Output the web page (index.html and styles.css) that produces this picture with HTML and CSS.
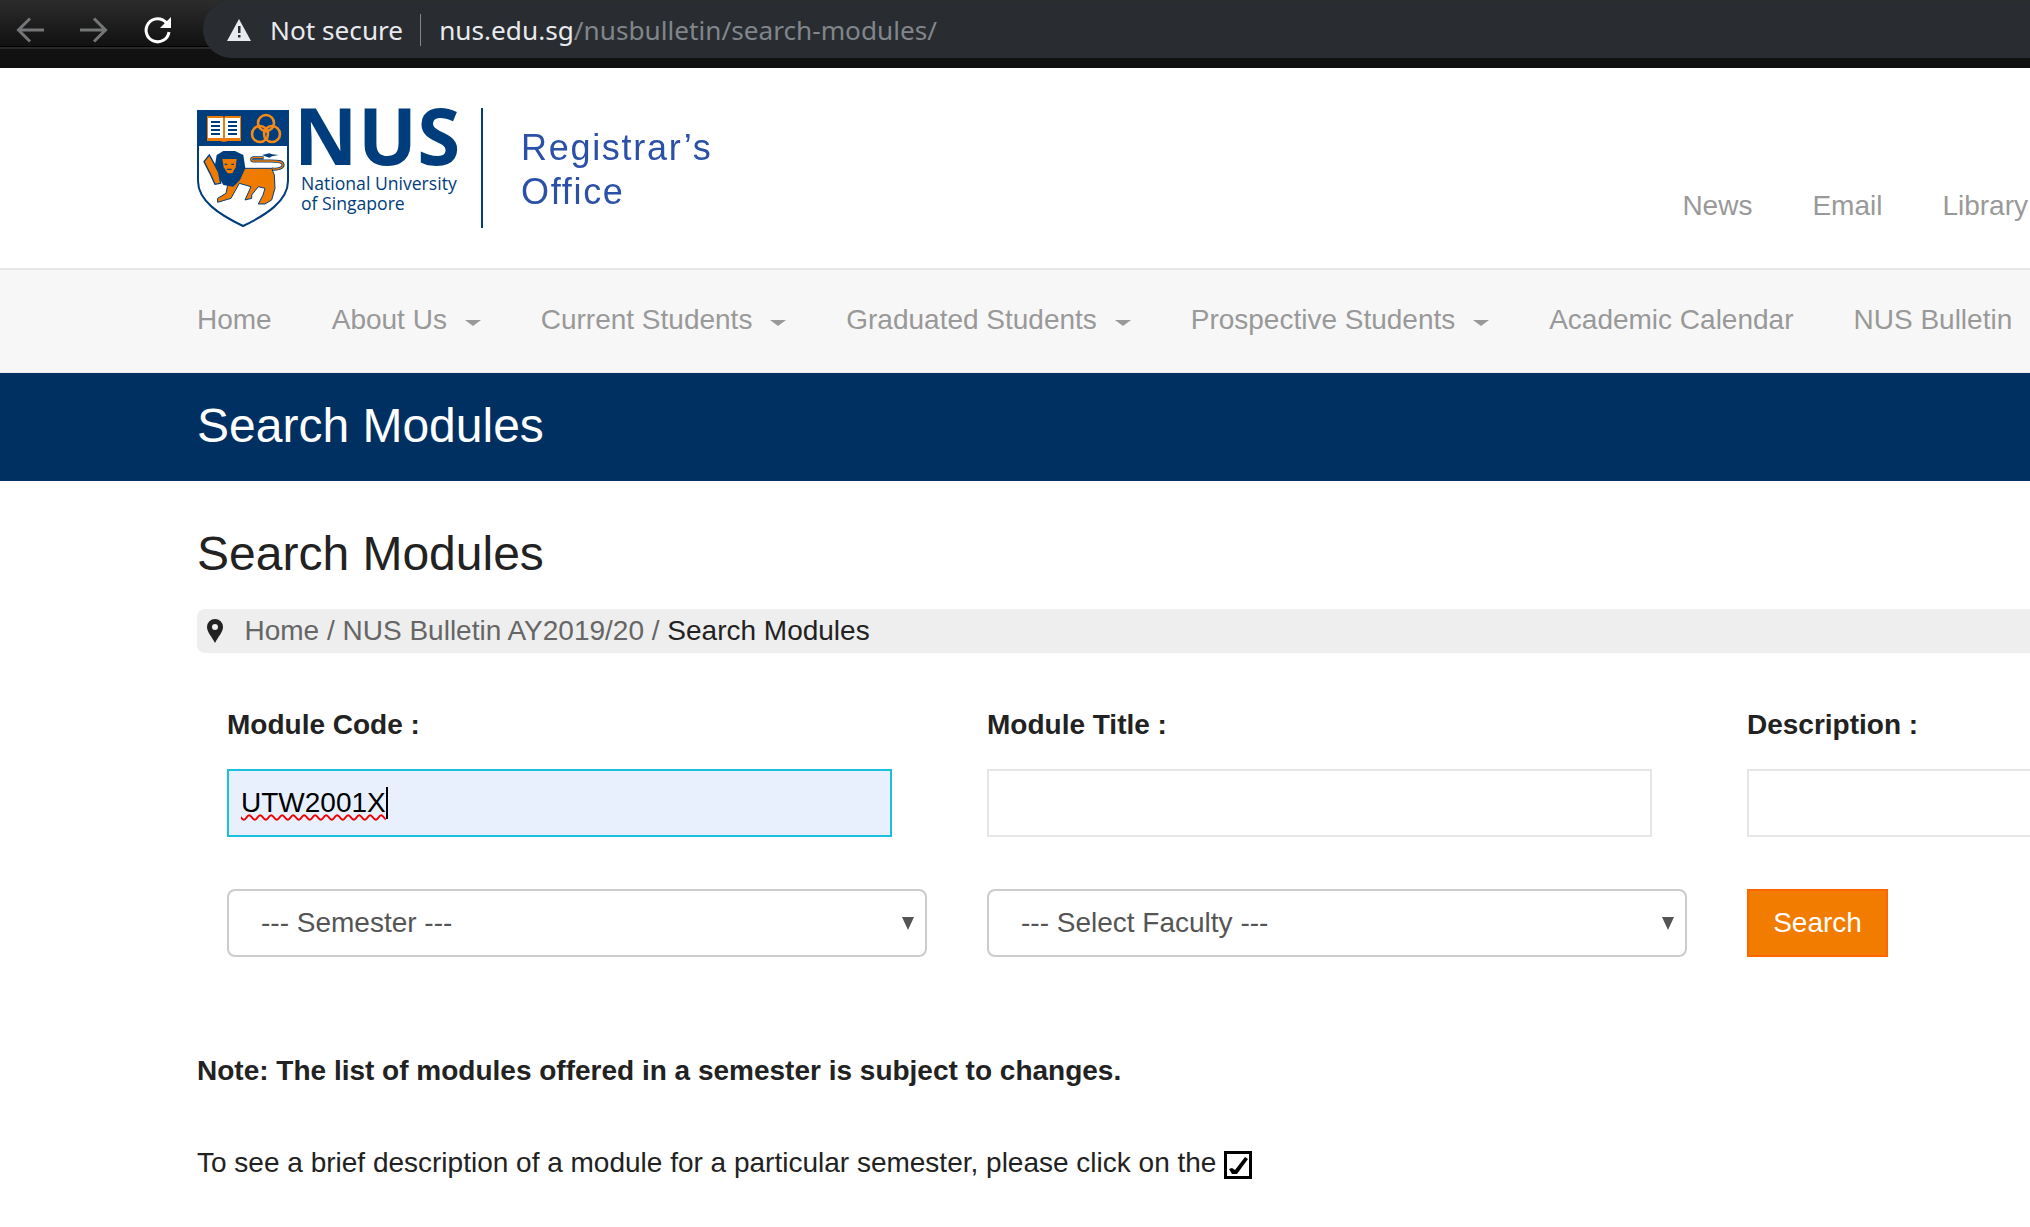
FILE: index.html
```html
<!DOCTYPE html>
<html lang="en">
<head>
  <meta charset="UTF-8" />
  <title>Search Modules</title>
  <link rel="stylesheet" href="styles.css">
</head>
<body>
  <!-- Browser toolbar -->
  <div class="toolbar">
    <div class="toolbar-buttons">
      <svg class="tb-icon" viewBox="0 0 30 30"><path d="M29 15H4M15 3.500L3.500 15 15 26.500" fill="none" stroke="#757677" stroke-width="3"/></svg>
      <svg class="tb-icon" viewBox="0 0 30 30"><path d="M1 15h25M15 3.500L26.500 15 15 26.500" fill="none" stroke="#757677" stroke-width="3"/></svg>
      <svg class="tb-icon" viewBox="0 0 30 30"><path d="M23.500 8A11.500 11.500 0 1 0 26 17" fill="none" stroke="#fff" stroke-width="3"/><path d="M28 2v11H17z" fill="#fff"/></svg>
    </div>
    <div class="omnibox">
      <svg class="warn-icon" viewBox="0 0 24 22"><path d="M12 0l12 22H0z" fill="#e8eaed"/><path d="M11 7h2.500v7H11zM11 16h2.500v2.500H11z" fill="#292c30"/></svg>
      <span class="not-secure">Not secure</span>
      <span class="omni-sep"></span>
      <span class="url-host">nus.edu.sg</span><span class="url-path">/nusbulletin/search-modules/</span>
    </div>
  </div>
  <div class="toolbar-edge"></div>

  <!-- Site header -->
  <header class="site-header">
    <div class="logo">
      <svg class="shield" viewBox="0 0 92 117">
        <path d="M1 1h90v70c0 20-22 34-45 45C23 105 1 91 1 71z" fill="#fff" stroke="#003d7c" stroke-width="2"/>
        <path d="M0 0h92v36H0z" fill="#003d7c"/>
        <path d="M10 6h16l1 2 1-2h16v25H31l-4 1-4-1H10z" fill="#ef7c00"/>
        <path d="M11 8h15v20H11zM28 8h15v20H28z" fill="#fff"/>
        <path d="M14 12h9M14 16h9M14 20h9M14 24h9M31 12h9M31 16h9M31 20h9M31 24h9" stroke="#003d7c" stroke-width="2"/>
        <g fill="none" stroke="#f28a1a" stroke-width="2.600">
          <circle cx="69" cy="13" r="8"/>
          <circle cx="63" cy="24" r="8"/>
          <circle cx="75" cy="24" r="8"/>
        </g>
        <!-- lion, drawn in crop pixels -->
        <g transform="translate(-7 -5) scale(.3333)">
          <path d="M245 192c22 2 36-4 34-14-2-9-14-10-38-10h-50c-8 0-8-10 0-10h30" fill="none" stroke="#003d7c" stroke-width="9"/>
          <path d="M245 192c22 2 36-4 34-14-2-9-14-10-38-10h-50c-8 0-8-10 0-10h30" fill="none" stroke="#ef7c00" stroke-width="4"/>
          <path d="M216 150l22-5 8 3 20 2-20 4-8 4z" fill="#003d7c"/>
          <path d="M150 190h95l8 20 2 40-10 35-20 12h-20l14-27 6-20-20-5-20 25v10l-20 5 18-40-35-10-25 45-40 12v-12l25-15 5-25z" fill="#ef7c00" stroke="#003d7c" stroke-width="3"/>
          <path d="M80 150l20-12h35l25 12 6 40-16 35-20 20-30-5-15-25-10-35z" fill="#003d7c"/>
          <path d="M97 162h43l-3 25-10 18h-14l-12-18z" fill="#ef7c00"/>
          <path d="M42 170l16-20 14 25 14 27 6 33-17 3-15-33z" fill="#ef7c00" stroke="#003d7c" stroke-width="4"/>
          <path d="M104 178h8M124 178h8M111 193h14" stroke="#003d7c" stroke-width="4"/>
        </g>
      </svg>
      <div class="wordmark">
        <div class="wordmark-nus">NUS</div>
        <div class="wordmark-name">National University<br>of Singapore</div>
      </div>
      <div class="logo-divider"></div>
      <div class="logo-office">Registrar’s<br>Office</div>
    </div>
    <ul class="top-links">
      <li>News</li>
      <li>Email</li>
      <li>Library</li>
    </ul>
  </header>

  <nav class="main-nav">
    <span>Home</span>
    <span class="has-sub">About Us</span>
    <span class="has-sub">Current Students</span>
    <span class="has-sub">Graduated Students</span>
    <span class="has-sub">Prospective Students</span>
    <span>Academic Calendar</span>
    <span>NUS Bulletin</span>
  </nav>

  <div class="title-band">Search Modules</div>

  <main class="content">
    <h1>Search Modules</h1>

    <div class="breadcrumb">
      <svg class="pin" viewBox="0 0 16 24"><path fill-rule="evenodd" d="M8 0a8 8 0 0 1 8 8c0 5-5 10-8 16C5 18 0 13 0 8a8 8 0 0 1 8-8zm0 5a3 3 0 1 0 0 6 3 3 0 0 0 0-6z" fill="#222"/></svg>
      <span class="crumb">Home / NUS Bulletin AY2019/20 / </span><span class="crumb-current">Search Modules</span>
    </div>

    <form class="search-form">
      <div class="field">
        <label>Module Code :</label>
        <div class="text-box focused"><span class="typed">UTW2001X</span><span class="caret"></span></div>
        <div class="select-box">--- Semester ---</div>
      </div>
      <div class="field">
        <label>Module Title :</label>
        <div class="text-box"></div>
        <div class="select-box">--- Select Faculty ---</div>
      </div>
      <div class="field">
        <label>Description :</label>
        <div class="text-box"></div>
        <div class="search-btn">Search</div>
      </div>
    </form>

    <p class="note">Note: The list of modules offered in a semester is subject to changes.</p>
    <p class="hint">To see a brief description of a module for a particular semester, please click on the
      <svg class="check-icon" viewBox="0 0 28 28"><path d="M1.500 1.500h25v25h-25z" fill="#fff" stroke="#000" stroke-width="3"/><path d="M5 18l3-1 3 2L21 6l3 2-11 15H8z" fill="#000"/></svg>
    </p>
  </main>
</body>
</html>
```

FILE: styles.css
```css
html, body {
  margin: 0;
  padding: 0;
  height: 100%;
  overflow: hidden;
}

body {
  font-family: "Liberation Sans", Arial, sans-serif;
  font-size: 28px;
  background: #fff;
  color: #222;
  width: 2030px;
}

/* Browser toolbar */
.toolbar {
  height: 58px;
  display: flex;
  background: linear-gradient(#2c2c2c, #111 46px, #000 46px, #000 47px, #2a2a2a 47px, #2a2a2a 49px, #111 49px);
  overflow: hidden;
}

.toolbar-buttons {
  width: 203px;
  flex: none;
  display: flex;
  gap: 34px;
  padding: 15px 0 0 15px;
  box-sizing: border-box;
}

.tb-icon {
  width: 30px;
  height: 30px;
}

.omnibox {
  flex: 1;
  display: flex;
  align-items: center;
  background: #292c30;
  border-radius: 29px 0 0 29px;
  margin-top: 1px;
  padding-left: 24px;
  font-family: "Noto Sans", sans-serif;
  font-size: 26.200px;
  color: #e8eaed;
  white-space: nowrap;
}

.warn-icon {
  width: 24px;
  height: 22px;
  margin-right: 19px;
}

.omni-sep {
  width: 1px;
  height: 32px;
  background: #80868b;
  margin: 0 18px 0 17px;
}

.url-path {
  color: #80868b;
}

.toolbar-edge {
  height: 10px;
  background: #111;
}

/* Site header */
.site-header {
  height: 202px;
  display: flex;
  justify-content: space-between;
  padding: 40px 2px 0 197px;
  box-sizing: border-box;
  border-bottom: 2px solid #e7e7e7;
}

.logo {
  display: flex;
  align-items: flex-start;
  height: 120px;
}

.shield {
  width: 92px;
  height: 117px;
  margin-top: 2px;
}

.wordmark {
  margin: 1px 0 0 12px;
  color: #003d7c;
  width: 180px;
}

.wordmark-nus {
  font-family: "Open Sans", sans-serif;
  font-weight: 700;
  font-size: 78px;
  line-height: 53px;
  letter-spacing: 0.500px;
  margin: 0 0 11px -7px;
}

.wordmark-name {
  font-family: "Open Sans", sans-serif;
  font-size: 17.600px;
  line-height: 20px;
}

.logo-divider {
  width: 2px;
  height: 120px;
  background: #003d7c;
}

.logo-office {
  margin: 18px 0 0 38px;
  font-size: 36px;
  line-height: 44px;
  letter-spacing: 1.700px;
  color: #2a50a8;
  filter: blur(0.4px);
}

.top-links {
  list-style: none;
  display: flex;
  gap: 60px;
  margin: 0;
  padding: 82px 0 0;
  color: #999;
  white-space: nowrap;
}

/* Nav */
.main-nav {
  height: 103px;
  display: flex;
  align-items: center;
  gap: 60px;
  padding: 0 0 2px 197px;
  box-sizing: border-box;
  background: #f7f7f7;
  color: #999;
  white-space: nowrap;
  border-bottom: 1px solid #ececec;
}

.has-sub::after {
  content: "";
  display: inline-block;
  margin-left: 17.850px;
  vertical-align: 3px;
  border-top: 6px solid #999;
  border-left: 8px solid transparent;
  border-right: 8px solid transparent;
}

.title-band {
  height: 108px;
  background: #002f62;
  color: #fff;
  font-size: 48px;
  line-height: 106px;
  padding-left: 197px;
}

/* Content */
.content {
  padding-left: 197px;
}

h1 {
  font-size: 48px;
  font-weight: 400;
  line-height: 58px;
  margin: 44px 0 26px;
  color: #222;
}

.breadcrumb {
  height: 44px;
  display: flex;
  align-items: center;
  background: #eee;
  border-radius: 8px 0 0 8px;
  padding-left: 10px;
  white-space: pre;
}

.pin {
  width: 16px;
  height: 24px;
  margin-right: 21.500px;
}

.crumb {
  color: #666;
}

.search-form {
  display: flex;
  gap: 60px;
  padding: 55px 0 0 30px;
}

.field {
  flex: none;
  width: 700px;
}

.field label {
  display: block;
  font-weight: 700;
  line-height: 34px;
  margin-bottom: 27px;
}

.text-box {
  width: 665px;
  height: 68px;
  box-sizing: border-box;
  border: 2px solid #e5e5e5;
  display: flex;
  align-items: center;
  padding-left: 12px;
  margin-bottom: 52px;
}

.text-box.focused {
  border-color: #1bc0de;
  background: #e8f0fe;
  color: #000;
}

.typed {
  text-decoration: underline wavy #e00;
  text-decoration-thickness: 1.500px;
  text-underline-offset: 2px;
}

.caret {
  width: 2px;
  height: 32px;
  background: #000;
}

.select-box {
  height: 68px;
  box-sizing: border-box;
  border: 2px solid #ccc;
  border-radius: 8px;
  display: flex;
  align-items: center;
  padding-left: 32px;
  color: #555;
  position: relative;
}

.select-box::after {
  content: "";
  position: absolute;
  right: 11px;
  top: 26px;
  border-top: 13px solid #555;
  border-left: 6px solid transparent;
  border-right: 6px solid transparent;
}

.search-btn {
  width: 141px;
  height: 68px;
  box-sizing: border-box;
  background: #f27c00;
  border: 2px solid #ff6600;
  color: #fff;
  display: flex;
  align-items: center;
  justify-content: center;
}

.note {
  margin: 94px 0 0;
  font-weight: 700;
  line-height: 40px;
}

.hint {
  margin: 52px 0 0;
  line-height: 40px;
}

.check-icon {
  width: 28px;
  height: 28px;
  vertical-align: -7px;
}
```
